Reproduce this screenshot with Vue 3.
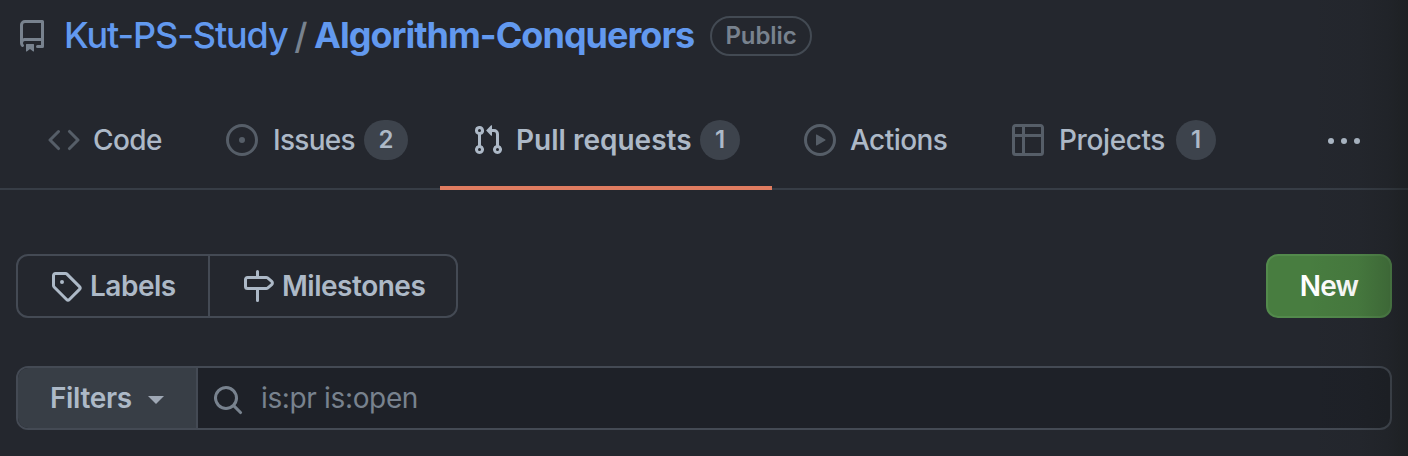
<script setup>
const tabs = [
  { id: 'code', label: 'Code', width: 178 },
  { id: 'issues', label: 'Issues', width: 246, count: 2 },
  { id: 'pulls', label: 'Pull requests', width: 332, count: 1, active: true },
  { id: 'actions', label: 'Actions', width: 208 },
  { id: 'projects', label: 'Projects', width: 268, count: 1 },
]
const icons = {
  code: 'M4.72 3.22a.75.75 0 011.06 1.06L2.06 8l3.72 3.72a.75.75 0 11-1.06 1.06L.47 8.53a.75.75 0 010-1.06l4.25-4.25zm6.56 0a.75.75 0 10-1.06 1.06L13.94 8l-3.72 3.72a.75.75 0 101.06 1.06l4.25-4.25a.75.75 0 000-1.06l-4.25-4.25z',
  issues: 'M8 9.5a1.5 1.5 0 100-3 1.5 1.5 0 000 3z M8 0a8 8 0 100 16A8 8 0 008 0zM1.5 8a6.5 6.5 0 1113 0 6.5 6.5 0 01-13 0z',
  pulls: 'M7.177 3.073L9.573.677A.25.25 0 0110 .854v4.792a.25.25 0 01-.427.177L7.177 3.427a.25.25 0 010-.354zM3.75 2.5a.75.75 0 100 1.5.75.75 0 000-1.5zm-2.25.75a2.25 2.25 0 113 2.122v5.256a2.251 2.251 0 11-1.5 0V5.372A2.25 2.25 0 011.5 3.25zM11 2.5h-1V4h1a1 1 0 011 1v5.628a2.251 2.251 0 101.5 0V5A2.5 2.5 0 0011 2.5zm1 10.25a.75.75 0 111.5 0 .75.75 0 01-1.5 0zM3.75 12a.75.75 0 100 1.5.75.75 0 000-1.5z',
  actions: 'M1.5 8a6.5 6.5 0 1113 0 6.5 6.5 0 01-13 0zM8 0a8 8 0 100 16A8 8 0 008 0zM6.379 5.227A.25.25 0 006 5.442v5.117a.25.25 0 00.379.214l4.264-2.559a.25.25 0 000-.428L6.379 5.227z',
  projects: 'M0 1.75C0 .784.784 0 1.75 0h12.5C15.216 0 16 .784 16 1.75v12.5A1.75 1.75 0 0114.25 16H1.75A1.75 1.75 0 010 14.25V1.75zM1.5 6.5v7.75c0 .138.112.25.25.25H5v-8H1.5zM5 5V1.5H1.75a.25.25 0 00-.25.25V5H5zm1.5 1.5v8h7.75a.25.25 0 00.25-.25V6.5h-8zm8-1.5V1.75a.25.25 0 00-.25-.25H6.5V5h8z',
}
</script>

<template>
  <main class="page">
    <header class="repo">
      <svg class="icon repo-icon" viewBox="0 0 16 16"><path fill-rule="evenodd" d="M2 2.5A2.5 2.5 0 014.5 0h8.75a.75.75 0 01.75.75v12.5a.75.75 0 01-.75.75h-2.5a.75.75 0 110-1.5h1.75v-2h-8a1 1 0 00-.714 1.7.75.75 0 01-1.072 1.05A2.495 2.495 0 012 11.5v-9zm10.5-1V9h-8c-.356 0-.694.074-1 .208V2.5a1 1 0 011-1h8zM5 12.25v3.25a.25.25 0 00.4.2l1.45-1.087a.25.25 0 01.3 0L8.6 15.7a.25.25 0 00.4-.2v-3.25a.25.25 0 00-.25-.25h-3.5a.25.25 0 00-.25.25z" /></svg>
      <a class="owner">Kut-PS-Study</a>
      <span class="slash">/</span>
      <a class="name">Algorithm-Conquerors</a>
      <span class="badge">Public</span>
    </header>

    <nav class="tabs">
      <a v-for="t in tabs" :key="t.id" class="tab" :class="[t.id, { active: t.active }]" :style="{ width: t.width + 'px' }">
        <svg class="icon" viewBox="0 0 16 16"><path fill-rule="evenodd" :d="icons[t.id]" /></svg>
        <span class="label">{{ t.label }}</span>
        <span v-if="t.count" class="count" :class="{ wide: t.count > 1 }">{{ t.count }}</span>
      </a>
      <svg class="more" viewBox="0 0 32 6"><circle cx="3" cy="3" r="3" /><circle cx="16" cy="3" r="3" /><circle cx="29" cy="3" r="3" /></svg>
    </nav>

    <section class="actions-row">
      <div class="group">
        <a class="btn labels">
          <svg class="icon" viewBox="0 0 16 16"><path fill-rule="evenodd" d="M2.5 7.775V2.75a.25.25 0 01.25-.25h5.025a.25.25 0 01.177.073l6.25 6.25a.25.25 0 010 .354l-5.025 5.025a.25.25 0 01-.354 0l-6.25-6.25a.25.25 0 01-.073-.177zm-1.5 0V2.75C1 1.784 1.784 1 2.75 1h5.025c.464 0 .91.184 1.238.513l6.25 6.25a1.75 1.75 0 010 2.474l-5.026 5.026a1.75 1.75 0 01-2.474 0l-6.25-6.25A1.75 1.75 0 011 7.775zM6 5a1 1 0 100 2 1 1 0 000-2z" /></svg>
          <span>Labels</span>
        </a>
        <a class="btn milestones">
          <svg class="icon" viewBox="0 0 16 16"><path fill-rule="evenodd" d="M7.75 0a.75.75 0 01.75.75V3h3.634c.414 0 .814.147 1.13.414l2.07 1.75a1.75 1.75 0 010 2.672l-2.07 1.75a1.75 1.75 0 01-1.13.414H8.5v5.25a.75.75 0 11-1.5 0V10H2.75A1.75 1.75 0 011 8.25v-3.5C1 3.784 1.784 3 2.75 3H7V.75A.75.75 0 017.75 0zm0 8.5h4.384a.25.25 0 00.161-.06l2.07-1.75a.25.25 0 000-.38l-2.07-1.75a.25.25 0 00-.161-.06H2.75a.25.25 0 00-.25.25v3.5c0 .138.112.25.25.25h5z" /></svg>
          <span>Milestones</span>
        </a>
      </div>
      <button class="new"><span>New</span></button>
    </section>

    <section class="search">
      <button class="filters"><span>Filters</span><i class="caret"></i></button>
      <div class="field">
        <svg class="icon" viewBox="0 0 16 16"><path fill-rule="evenodd" d="M11.5 7a4.499 4.499 0 11-8.998 0A4.499 4.499 0 0111.5 7zm-.82 4.74a6 6 0 111.06-1.06l3.04 3.04a.75.75 0 11-1.06 1.06l-3.04-3.04z" /></svg>
        <span class="query">is:pr is:open</span>
      </div>
    </section>
    <div class="edge"></div>
  </main>
</template>

<style>
body { background: #24272e; overflow: hidden; }
</style>

<style scoped>
.page {
  position: relative;
  height: 456px;
  overflow: hidden;
  box-sizing: border-box;
  background: #24272e;
  color: #adb9c7;
  font-family: Inter, "Liberation Sans", sans-serif;
  font-size: 28px;
  line-height: 40px;
  white-space: nowrap;
}
.page * { box-sizing: border-box; }
.icon { width: 32px; height: 32px; flex: none; fill: currentColor; }
.repo { display: flex; align-items: center; height: 72px; padding-left: 16px; font-size: 36px; line-height: 40px; color: #78828e; }
.owner, .name { padding-bottom: 2px; color: #6299ef; }
.owner { width: 223px; margin-left: 16px; font-weight: 450; letter-spacing: -1.1px; }
.slash { width: 28px; text-align: center; font-weight: 500; }
.name { width: 379px; margin-left: -1px; font-weight: 650; letter-spacing: -0.98px; }
.badge {
  width: 102px; height: 40px; margin-left: 17px; border: 2px solid #434a53; border-radius: 20px;
  font-size: 24px; line-height: 35px; font-weight: 600; letter-spacing: -0.1px; text-align: center;
}
.tabs { display: flex; height: 118px; padding: 20px 0 0 16px; border-bottom: 2px solid #373d46; }
.tab { display: flex; align-items: center; height: 98px; padding: 0 32px 2px; flex: none; font-weight: 450; }
.tab .icon { color: #565e68; margin-right: 13px; }
.tab .label { flex: 1; letter-spacing: -0.55px; }
.tab.active { font-weight: 600; border-bottom: 4px solid #e07c60; padding-top: 2px; padding-bottom: 0; }
.tab.active .icon { color: #adb9c7; margin-right: 12px; }
.tab.active .label { letter-spacing: 0; }
.tab.issues .label { letter-spacing: -0.7px; padding-left: 2px; }
.tab.projects .label { letter-spacing: -0.4px; padding-left: 2px; }
.tab.actions .label { padding-left: 1px; }
.count {
  width: 40px; height: 40px; border-radius: 20px; background: #3d434c;
  font-size: 24px; line-height: 39px; font-weight: 600; text-align: center; flex: none;
}
.wide { width: 44px; }
.more { width: 34px; height: 6px; margin: 46px 0 0 79px; fill: #adb9c7; flex: none; }
.actions-row { display: flex; justify-content: space-between; padding: 64px 16px 0; }
.group { display: flex; width: 442px; height: 64px; border: 2px solid #444a54; border-radius: 12px; font-weight: 580; letter-spacing: -0.48px; }
.btn { display: flex; align-items: center; }
.btn .icon { margin-right: 8px; }
.labels { width: 192px; padding-left: 32px; border-right: 2px solid #444a54; }
.milestones { padding-left: 32px; }
button { font: inherit; color: inherit; }
.new {
  width: 126px; height: 64px; padding: 0; border: 2px solid #538a4c; border-radius: 12px;
  background: #487d40; color: #fff; font-weight: 640; letter-spacing: -0.8px;
}
.search { display: flex; height: 64px; margin: 48px 16px 0; border: 2px solid #444a54; border-radius: 12px; overflow: hidden; background: #1e2128; }
.filters {
  display: flex; align-items: center; width: 180px; padding: 0 0 0 32px; border: 0;
  border-right: 2px solid #444a54; background: #383e46; font-weight: 580; letter-spacing: -0.35px;
}
.caret { margin-left: 16px; border: 8px solid transparent; border-top-color: #9fa8b5; border-bottom: 0; margin-top: 3px; }
.field { display: flex; align-items: center; padding-left: 14px; color: #78828e; }
.field .icon { margin-right: 17px; margin-top: 4px; }
.query { letter-spacing: -0.35px; font-weight: 430; }
.edge {
  position: absolute; inset: 0 0 0 auto; width: 100px; pointer-events: none;
  background: linear-gradient(90deg, rgba(20, 23, 20, 0), rgba(20, 23, 20, .06) 50%, rgba(20, 23, 20, .2) 80%, rgba(20, 23, 20, .42));
}
</style>
